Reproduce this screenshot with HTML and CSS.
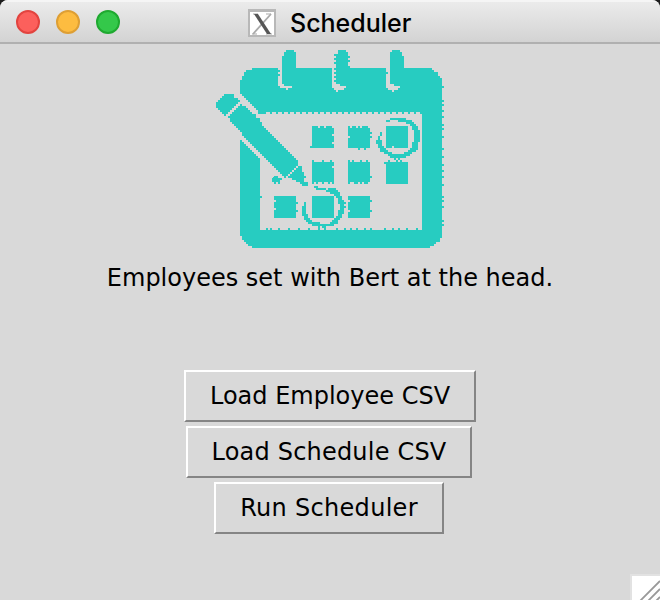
FILE: index.html
```
<!DOCTYPE html>
<html lang="en">
<head>
<meta charset="utf-8">
<title>Scheduler</title>
<link rel="stylesheet" href="styles.css">
</head>
<body>
<div class="window">
  <header class="titlebar">
    <div class="lights"><span class="light red"></span><span class="light amber"></span><span class="light green"></span></div>
    <svg class="x-icon" viewBox="0 0 28 28">
      <rect width="28" height="28" fill="#b8b8b8"/>
      <rect x="2" y="3" width="24" height="23" fill="#fff"/>
      <path d="M23 5L5 25" stroke="#aaa" stroke-width="1.8"/>
      <path d="M5 5h5M18 5h5M4 25h5M18 25h6" stroke="#aaa" stroke-width="1.2"/>
      <path d="M6 5h4l13 20h-4z" fill="#555"/>
    </svg>
    <h1 class="title">Scheduler</h1>
  </header>
  <main class="content">
    <svg class="calendar" viewBox="0 0 114 99" shape-rendering="crispEdges">
      <!-- calendar frame -->
      <path d="M18 9H108v1h1v1h2v2h1v1h1V94h-1v2h-2v1h-1v1h-2v1H18v-1h-2v-1h-1v-1h-1v-1h-1v-2h-1V45h1v1h1v1h1v1h1v1h1v1h1v1h1v1h1v1h1v1h1v1V90H103V31H21v-1h-1v-1h-1v-1h-1v-1h-1v-1h-1v-1h-1v-1h-1v-1h-1v-1h-1V15h1v-2h1v-2h1v-1h3z"/>
      <path class="runs" d="M21 31.500h3"/>
      <path class="runs" d="M24 31.500H103" stroke-dasharray="1 2"/>
      <path class="runs" d="M25 89.500h1m1 0h1m3 0h1m4 0h1m4 0h1m4 0h1m4 0h1m2 0h1m5 0h1m3 0h1m2 0h1m2 0h1m3 0h1m2 0h1m6 0h1m3 0h1m2 0h1m3 0h1m4 0h1M22 73.500h1"/>
      <path class="runs" d="M113 18.500h1m-1 7h1m-1 2h1m-1 3h1m-1 3h1m-1 4h1m-1 2h1m-1 4h1m-1 6h1m-1 4h1m-1 4h1m-1 3h1m-1 3h1m-1 4h1m-1 6h1m-1 2h1m-1 3h1m-1 7h1m-1 2h1"/>
      <!-- binder rings -->
      <path class="gap" d="M31 9h2v8h1v1h4v1h-2v1h-1v-1h-3v-1h-1v-5h1v-1h-1z"/>
      <path d="M31 10h1v1h-1zM33 17V3h1V1h1V0h4v1h1v2h0v14z"/>
      <path class="gap" d="M58 9h2v8h2v1h3v1h-1v1h-3v1h-1v-1h-1v-1h-1z"/>
      <path d="M60 17V2h1V0h4v1h1v16zM62 17h3v1h-3zM59 2h1v1h-1zm0 2h1v1h-1zm0 2h1v1h-1zm0 3h1v1h-1zm0 2h1v1h-1zm0 2h1v1h-1zm0 2h1v1h-1zM66 3h1v1h-1zm0 2h1v1h-1zm0 3h1v1h-1z"/>
      <path class="gap" d="M85 9h2v8h2v1h3v1h-1v1h-2v1h-1v-1h-2v-1h-1z"/>
      <path d="M87 17V1h1V0h4v1h1v2h1v14zM89 17h1v1h-1zM91 17h1v1h-1zM85 11h1v1h-1z"/>
      <!-- pencil -->
      <path d="M5 22H9v2h2v1h1v1h-1v1h-1v1h-1v1h-1v1h-1v1h-1v1h-1v1H4v-1H3v-1H2v-1H1v-1H0v-3h1v-1h1v-1h1v-1h1v-1h1z"/>
      <path d="M12 27h1v1h2v1h1v1h1v1h1v1h2v2h2v2h1v2h1v1h1v1h1v1h1v1h1v1h1v1h1v1h1v1h1v1h1v1h1v1h1v1h1v1h1v1h1v1h1v1h1v1h1v3h-1v1h-1v1h-1v1h-1v1h-1v1h-1v1h-1v-1h-1v-1h-1v-1h-1v-1h-1v-1h-1v-1h-1v-1h-1v-1h-1v-1h-1v-1h-1v-1h-1v-1h-1v-1h-1v-1h-1v-1h-1v-1h-1v-1h-1v-1h-1v-1h-1v-1h-1v-1h-1v-2h-1v-1h-1v-1h-1v-1h-1v-1h-1v-1h-1v-2h-1v-1h1v-1h1v-1h1v-1h1v-1h1v-1h1z"/>
      <path d="M42 58h1v3h1v2h1v1h-1v2h2v2h-3v-1h-1v-1h-2v-1h-2v-1h-2v-1h1v-1h1v-1h1v-1h1v-1h1v-1h1zM29 63h2v1h2v1h-1v2h-1v-1h-1v1h-1v-1h-1v-2z"/>
      <!-- day squares -->
      <path d="M48 39h11v10H47v-1h1zM66 39h11v10H66zM85 38h11v11H85zM48 56h11v10H48zM66 56h11v10H66zM85 56h11v11H85zM29 73h11v11H29zM48 73h11v11H48zM66 73h11v11H66z"/>
      <path class="runs" d="M48 38.500h3m1 0h2m1 0h3M66 38.500h1m1 0h2m1 0h1m1 0h3M48 55.500h1m4 0h1m3 0h1M66 55.500h1m1 0h1m3 0h1m2 0h1M84 56.500h1m1-1h1m3 0h1m1 0h1M48 66.500h1m1 0h1m2 0h1m2 0h1m1 0h1M66 66.500h1m2 0h2m1 0h1m1 0h2M77 41.500h1m-1 2h1m-7 6h1m2 0h1M77 63.500h1m-1 12h1m-1 5h1M40 76.500h1m-1 4h1"/>
      <path class="gap" d="M58 42h1v1h-1zm0 4h1v1h-1zM58 58h1v1h-1zM66 43h1v1h-1zM66 75h1v1h-1zM29 75h1v1h-1zm0 4h1v1h-1zM88 48h1v1h-1zM66 80h1v1h-1z"/>
      <!-- circled days, drawn as pixel runs -->
      <path class="runs" d="M87 34.500h8M85 35.500h2m4 0h7M95 36.500h4M97 37.500h3M98 38.500h3M98 39.500h3M99 40.500h3M99 41.500h3M99 42.500h3M99 43.500h3M99 44.500h3M99 45.500h3M98 46.500h3M98 47.500h3M98 48.500h3M97 49.500h4M96 50.500h4M94 51.500h4M86 52.500h11M87 53.500h8M89 54.500h1m1 0h1M82 41.500h1M82 42.500h1M81 43.500h1M81 44.500h1M80 45.500h3M80 46.500h3M81 47.500h2M81 48.500h3M82 49.500h3M82 50.500h4M84 51.500h4"/>
      <path class="runs" d="M49 68.500h2M50 69.500h5m1 0h4M55 70.500h6M57 71.500h5M59 72.500h3M60 73.500h3M61 74.500h2M61 75.500h3M61 76.500h4M62 77.500h2M62 78.500h3M62 79.500h2M61 80.500h3M61 81.500h3M61 82.500h2M60 83.500h3M59 84.500h3M58 85.500h3M57 86.500h4M48 87.500h11M51 88.500h1m1 0h2M44 76.500h1M44 77.500h1M43 78.500h2M43 79.500h2M43 80.500h2M43 81.500h2M43 82.500h3M44 83.500h2M44 84.500h3M45 85.500h3M46 86.500h6"/>
    </svg>
    <p class="status">Employees set with Bert at the head.</p>
    <div class="actions">
      <button class="btn employee">Load Employee CSV</button>
      <button class="btn schedule">Load Schedule CSV</button>
      <button class="btn run">Run Scheduler</button>
    </div>
  </main>
  <svg class="grip" viewBox="0 0 28 24"><path d="M7 26L28 5M15 26L28 13M23 26L28 21" stroke="#999" stroke-width="1.8"/></svg>
</div>
</body>
</html>
```
FILE: styles.css
```
* { box-sizing: border-box; }
body { margin: 0; background: #1c1c1c; overflow: hidden; }
.window {
  position: relative;
  width: 660px;
  height: 600px;
  background: #d9d9d9;
  border-radius: 8px 8px 0 0;
  overflow: hidden;
  color: #000;
}
.titlebar {
  display: flex;
  align-items: center;
  height: 44px;
  padding-left: 16px;
  border-top: 2px solid #f5f5f5;
  border-bottom: 2px solid #b0b0b0;
  background: linear-gradient(#ebebeb, #d3d3d3);
}
.lights { display: flex; gap: 16px; }
.light { width: 24px; height: 24px; border-radius: 50%; border: 2px solid; }
.red { background: #fc605c; border-color: #e2443f; }
.amber { background: #fdbc40; border-color: #de9f34; }
.green { background: #34c84a; border-color: #1fa930; }
.x-icon { width: 28px; height: 28px; margin-left: 128px; margin-top: 2px; }
.title {
  margin: 2px 0 0 14px;
  font: 500 25px/38px Inter, sans-serif;
  letter-spacing: 0;
  white-space: nowrap;
}
.content { display: flex; flex-direction: column; align-items: center; padding-top: 6px; }
.calendar { width: 228px; height: 198px; fill: #27ccc1; }
.calendar .runs { stroke: #27ccc1; stroke-width: 1; fill: none; }
.calendar .gap { fill: #d9d9d9; }
.status {
  margin: 14px 0 0;
  height: 32px;
  font: 24px/32px "DejaVu Sans", sans-serif;
  white-space: nowrap;
}
.actions { display: flex; flex-direction: column; align-items: center; gap: 4px; margin-top: 76px; }
.btn {
  height: 52px;
  padding: 0;
  border: 2px solid;
  border-color: #fff #858585 #858585 #fff;
  background: #d9d9d9;
  color: #000;
  font: 24px/48px "DejaVu Sans", sans-serif;
  white-space: nowrap;
}
.employee { width: 292px; }
.schedule { width: 286px; margin-right: 2px; letter-spacing: 0.2px; }
.run { width: 230px; margin-right: 2px; letter-spacing: 0.3px; }
.grip {
  position: absolute;
  right: 0;
  bottom: 0;
  width: 28px;
  height: 24px;
  background: #fff;
  outline: 2px solid #e2e2e2;
}
```
